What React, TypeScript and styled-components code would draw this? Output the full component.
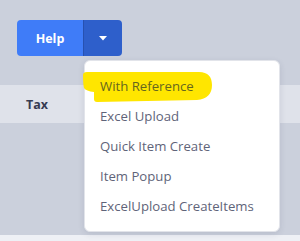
import React from "react";
import styled, { createGlobalStyle } from "styled-components";

const Global = createGlobalStyle`
  html, body { margin: 0; padding: 0; }
  body { width: 300px; height: 241px; overflow: hidden; background: #cbd0dc; font-family: "Open Sans", "Noto Sans", sans-serif; }
`;

const Page = styled.div`
  position: relative;
  width: 300px;
  height: 241px;
  display: flex;
  flex-direction: column;
`;

const Toolbar = styled.div`
  height: 85px;
  padding: 20px 0 0 17px;
  box-sizing: border-box;
  background: #cbd0dc;
`;

const SplitButton = styled.div`
  position: relative;
  display: flex;
  width: 105px;
  height: 36px;
  border-radius: 4px;
  overflow: hidden;
`;

const MainBtn = styled.div`
  width: 66px;
  display: flex;
  align-items: center;
  justify-content: center;
  background: #3f7cf8;
  color: #fff;
  font-family: "Open Sans", sans-serif;
  font-weight: 700;
  font-size: 12.5px;
`;

const CaretBtn = styled.div`
  flex: 1;
  display: flex;
  align-items: center;
  justify-content: center;
  background: #2e5fcb;
  border-left: 1px solid #2751b0;
`;

const HeaderRow = styled.div`
  height: 38px;
  background: #dfe2ea;
  display: flex;
  align-items: center;
  padding-left: 26px;
`;

const HeaderCell = styled.div`
  font-family: "Open Sans", sans-serif;
  font-weight: 700;
  font-size: 12.5px;
  color: #363b52;
`;

const Body = styled.div`
  flex: 1;
  background: #cbd0dc;
`;

const Footer = styled.div`
  height: 6px;
  background: #eef0f5;
`;

const Menu = styled.div`
  position: absolute;
  left: 84px;
  top: 60px;
  width: 196px;
  height: 172px;
  box-sizing: border-box;
  background: #fff;
  border-radius: 6px;
  border: 1px solid #e2e4ea;
  box-shadow: 0 2px 6px rgba(40, 50, 80, 0.12);
  padding: 10px 0 0 0;
  display: flex;
  flex-direction: column;
`;

const Item = styled.div<{ $hl?: boolean }>`
  position: relative;
  height: 30px;
  display: flex;
  align-items: center;
  padding-left: 15px;
  font-family: "Open Sans", sans-serif;
  font-size: 13.2px;
  color: ${(p) => (p.$hl ? "#66661f" : "#5f6479")};
`;

const ItemText = styled.span`
  position: relative;
`;

const Highlight = styled.svg`
  position: absolute;
  left: -2px;
  top: 1px;
`;

export default function App() {
  return (
    <>
      <Global />
      <Page>
        <Toolbar>
          <SplitButton>
            <MainBtn>Help</MainBtn>
            <CaretBtn>
              <svg width="8" height="5" viewBox="0 0 8 5">
                <path d="M0 0 L8 0 L4 4.5 Z" fill="#fff" />
              </svg>
            </CaretBtn>
          </SplitButton>
        </Toolbar>
        <HeaderRow>
          <HeaderCell>Tax</HeaderCell>
        </HeaderRow>
        <Body />
        <Footer />
        <Menu>
          <Item $hl>
            <Highlight width="130" height="31" viewBox="0 0 130 31">
              <path
                d="M0 3 Q0 0 4 0 L116 0 C125 0 129 5 129 13 C129 22 124 27 114 28 L14 30 Q11 30 11 27 L11 20 Q3 19 1 16 Q0 12 0 3 Z"
                fill="#ffe600"
              />
            </Highlight>
            <ItemText>With Reference</ItemText>
          </Item>
          <Item>Excel Upload</Item>
          <Item>Quick Item Create</Item>
          <Item>Item Popup</Item>
          <Item>ExcelUpload CreateItems</Item>
        </Menu>
      </Page>
    </>
  );
}
